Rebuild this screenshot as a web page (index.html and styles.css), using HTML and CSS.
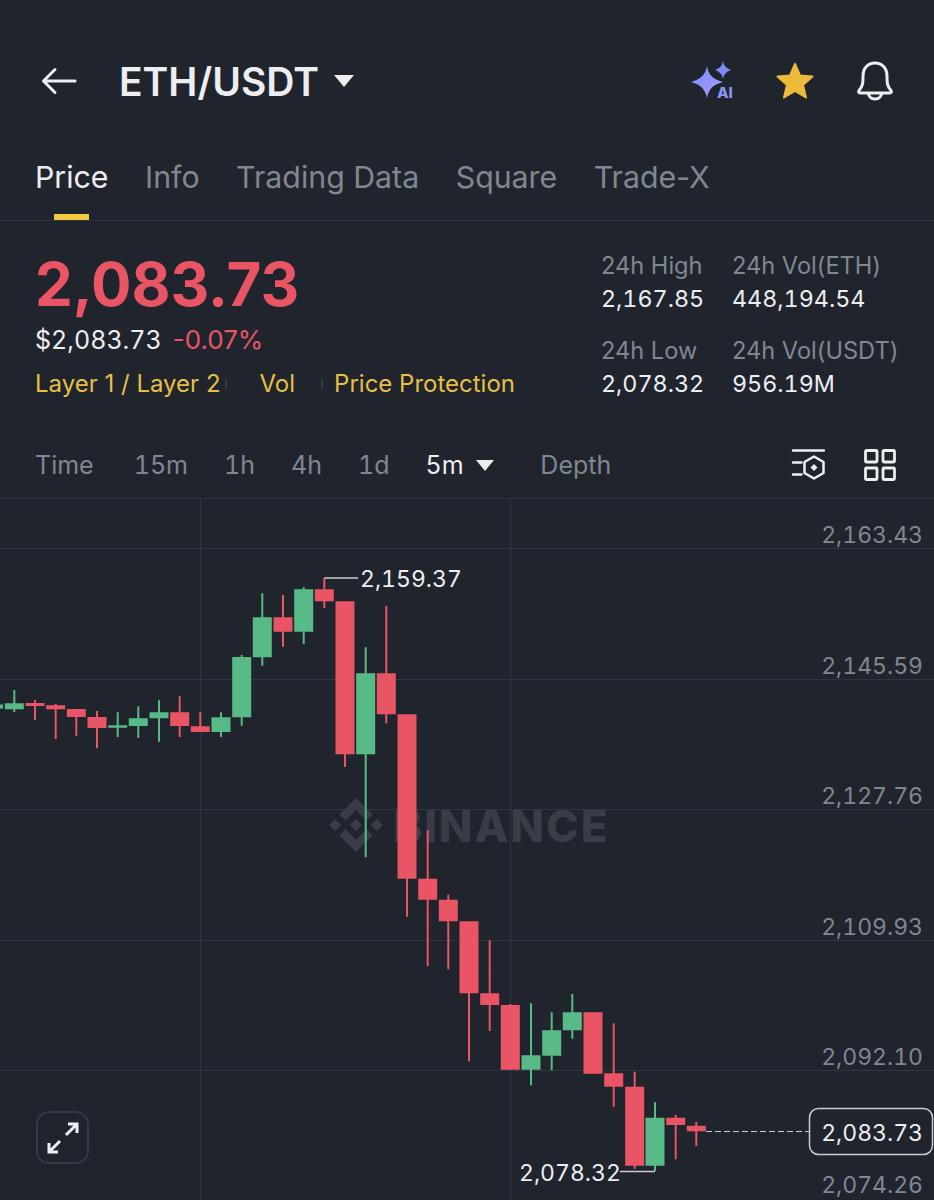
FILE: index.html
```html
<!DOCTYPE html>
<html lang="en">
<head>
  <meta charset="UTF-8">
  <meta name="viewport" content="width=device-width, initial-scale=1">
  <title>ETH/USDT</title>
  <link rel="stylesheet" href="styles.css">
</head>
<body>
  <header class="topbar">
    <div class="pair">
      <svg class="back" viewBox="0 0 36 28"><path d="M34 14H3M14 2.500L2.500 14 14 25.500"/></svg>
      <h1>ETH/USDT</h1>
      <span class="caret caret-lg"></span>
    </div>
    <div class="actions">
      <svg class="icon-ai" viewBox="0 0 44 40">
        <defs>
          <linearGradient id="aiGrad" x1="0" y1="0" x2="1" y2="1">
            <stop offset="0" stop-color="#6f8bff"/>
            <stop offset="1" stop-color="#b49cf6"/>
          </linearGradient>
        </defs>
        <path fill="url(#aiGrad)" d="M16 5C18 14 21 18 32 21 21 24 18 28 16 37 14 28 10 24 0 21 10 18 14 14 16 5Z"/>
        <path fill="#7f8cf8" d="M32 0C33 5 35 7 40 9 35 11 33 13 32 18 31 13 29 11 24 9 29 7 31 5 32 0Z"/>
        <text class="ai-label" x="26" y="37">AI</text>
      </svg>
      <svg class="icon-star" viewBox="0 0 40 40"><path d="M20 3L25 14.500 37.500 15.500 28 24 31 36.500 20 30 9 36.500 12 24 2.500 15.500 15 14.500Z"/></svg>
      <svg class="icon-bell" viewBox="0 0 40 40"><path d="M4 29.500C8 25 8 22 8 15 8 7 13 2 20 2S32 7 32 15C32 22 32 25 36 29.500 37 31 36 32 35 32H5C4 32 3 31 4 29.500ZM13 32C14 36 17 38 20 38S26 36 27 32"/></svg>
    </div>
  </header>

  <nav class="tabs">
    <a class="tab active">Price</a>
    <a class="tab">Info</a>
    <a class="tab">Trading Data</a>
    <a class="tab">Square</a>
    <a class="tab">Trade-X</a>
  </nav>

  <section class="summary">
    <div class="quote">
      <div class="last-price">2,083.73</div>
      <div class="fiat"><span class="usd">$2,083.73</span><span class="change">-0.07%</span></div>
      <div class="tags">
        <span>Layer 1 / Layer 2</span><i class="sep"></i>
        <span>Vol</span><i class="sep"></i>
        <span>Price Protection</span>
      </div>
    </div>
    <dl class="stats">
      <div><dt>24h High</dt><dd>2,167.85</dd></div>
      <div><dt>24h Vol(ETH)</dt><dd>448,194.54</dd></div>
      <div><dt>24h Low</dt><dd>2,078.32</dd></div>
      <div><dt>24h Vol(USDT)</dt><dd>956.19M</dd></div>
    </dl>
  </section>

  <div class="intervals">
    <span class="iv iv-time">Time</span>
    <span class="iv">15m</span>
    <span class="iv">1h</span>
    <span class="iv">4h</span>
    <span class="iv">1d</span>
    <span class="iv current">5m <span class="caret"></span></span>
    <span class="iv">Depth</span>
    <svg class="icon-indicators" viewBox="0 0 34 32">
      <path d="M2 1.500H33M2 13.500H10.500M2 25.500H10.500M23 7.500L32.500 13V24L23 29.500 13.500 24V13Z"/>
      <path class="dot" d="M23 15L26.500 18.500 23 22 19.500 18.500Z"/>
    </svg>
    <svg class="icon-grid" viewBox="0 0 32 32">
      <rect x="1.500" y="1.500" width="11.500" height="11.500" rx="1"/>
      <rect x="19" y="1.500" width="11.500" height="11.500" rx="1"/>
      <rect x="1.500" y="19" width="11.500" height="11.500" rx="1"/>
      <rect x="19" y="19" width="11.500" height="11.500" rx="1"/>
    </svg>
  </div>

  <div class="chart">
    <svg class="plot" viewBox="0 499 934 701">
      <!-- watermark -->
      <g class="mark" transform="translate(329 798) scale(.4265)">
        <path d="M38.730 53.200L63.320 28.620 87.920 53.220 102.220 38.910 63.320 0 24.420 38.900Z"/>
        <path d="M0 63.310L14.300 49 28.610 63.310 14.300 77.610Z"/>
        <path d="M38.730 73.410L63.320 98 87.920 73.400 102.230 87.690 63.320 126.600 24.410 87.720Z"/>
        <path d="M98 63.310L112.300 49 126.610 63.310 112.300 77.610Z"/>
        <path d="M77.830 63.300L63.320 48.780 48.810 63.280 63.320 77.780Z"/>
      </g>
      <text class="mark-text" x="393" y="842">BINANCE</text>

      <!-- grid -->
      <path class="grid" d="M0 548.500H934M0 679.500H934M0 809.500H934M0 940.500H934M0 1070.500H934M200.500 498V1200M510.500 498V1200"/>

      <!-- falling candles: wick + body -->
      <path class="down" d="
        M25.500 703h19v3h-19zM34 700h2v20h-2z
        M46.200 705.300h19v4h-19zM54.700 704h2v35h-2z
        M66.800 709h19v8h-19zM75.300 709h2v26.700h-2z
        M87.500 717h19v11h-19zM96 711h2v37.300h-2z
        M170.200 712.300h19v13.700h-19zM178.700 696.300h2v40.700h-2z
        M190.800 726.300h19v5.700h-19zM199.300 712.300h2v19.700h-2z
        M273.500 617.300h19v14.400h-19zM282 595h2v51.700h-2z
        M314.800 589.300h19v12h-19zM323.300 577.700h2v30.300h-2z
        M335.500 601.300h19v153h-19zM344 601.300h2v165.700h-2z
        M376.800 673.300h19v41h-19zM385.300 606h2v117.300h-2z
        M397.500 714.300h19v164.400h-19zM406 714.300h2v202.400h-2z
        M418.200 878.700h19v21h-19zM426.700 830h2v136h-2z
        M438.800 899.700h19v21.600h-19zM447.300 894.700h2v74.600h-2z
        M459.500 921.300h19v72h-19zM468 921.300h2v140h-2z
        M480.200 993.300h19v11.700h-19zM488.700 940.300h2v90.700h-2z
        M500.800 1005h19v64.700h-19zM509.300 1004h2v66h-2z
        M583.500 1012.300h19v61.400h-19z
        M604.200 1073.300h19v13.400h-19zM612.700 1023.300h2v83.400h-2z
        M625.200 1086.700h19v79h-19zM633.700 1071.700h2v97.300h-2z
        M666.200 1117.700h19v7.300h-19zM674.700 1115h2v44.300h-2z
        M686.800 1125.700h19v5.600h-19zM695.300 1121.700h2v24.300h-2z"/>

      <!-- rising candles -->
      <path class="up" d="
        M-16 704.500h19v4h-19z
        M4.800 703.300h19v6h-19zM13.300 690h2v22h-2z
        M108.200 725.300h19v2.400h-19zM116.700 712.300h2v24.700h-2z
        M128.800 718.300h19v7.700h-19zM137.300 706.300h2v31.700h-2z
        M149.500 712.300h19v6h-19zM158 700.300h2v41.400h-2z
        M211.500 717.300h19v14.700h-19zM220 712.300h2v24.700h-2z
        M232.200 657h19v60.300h-19zM240.700 655h2v70.700h-2z
        M252.800 617.300h19v40h-19zM261.300 593.300h2v72.400h-2z
        M294.200 589.300h19v42.400h-19zM302.700 587.300h2v56.700h-2z
        M356.200 673.300h19v81h-19zM364.700 647.300h2v210h-2z
        M521.500 1055.300h19v14.400h-19zM530 1003.300h2v82h-2z
        M542.200 1030.300h19v25.400h-19zM550.700 1012.300h2v58h-2z
        M562.800 1012.300h19v18h-19zM571.300 994h2v44.700h-2z
        M645.500 1117.700h19v48h-19zM654 1102.300h2v68.700h-2z"/>

      <!-- high / low markers -->
      <path class="marker" d="M324.500 578H358M620 1171.500H655"/>
      <text class="extreme" x="360" y="587">2,159.37</text>
      <text class="extreme" x="519" y="1181">2,078.32</text>

      <!-- last price -->
      <path class="last-line" d="M706 1131.500H809"/>
      <rect class="last-box" x="809.500" y="1108.500" width="123" height="46" rx="9"/>
      <text class="axis now" x="923" y="1141">2,083.73</text>

      <!-- price axis -->
      <text class="axis" x="923" y="543">2,163.43</text>
      <text class="axis" x="923" y="674">2,145.59</text>
      <text class="axis" x="923" y="804">2,127.76</text>
      <text class="axis" x="923" y="935">2,109.93</text>
      <text class="axis" x="923" y="1065">2,092.10</text>
      <text class="axis" x="923" y="1193">2,074.26</text>
    </svg>

    <button class="expand" aria-label="Fullscreen">
      <svg viewBox="0 0 32 32"><path d="M30 2L19 13M2 30L13 19M21 2H30V11M11 30H2V21"/></svg>
    </button>
  </div>
</body>
</html>
```

FILE: styles.css
```css
* { margin: 0; padding: 0; box-sizing: border-box; }
body {
  font-family: 'Inter', 'Lato', sans-serif;
  background: #20242d;
  color: #eceef2;
  width: 934px;
  height: 1200px;
  overflow: hidden;
}

.topbar {
  height: 140px;
  padding: 22px 39px 0 41px;
  display: flex;
  align-items: center;
  justify-content: space-between;
}
.pair { display: flex; align-items: center; }
.back {
  width: 36px;
  height: 28px;
  fill: none;
  stroke: #eceef2;
  stroke-width: 3;
  stroke-linecap: round;
  stroke-linejoin: round;
  margin-right: 42px;
}
.pair h1 { font-size: 39px; font-weight: 600; }
.caret {
  display: inline-block;
  width: 0;
  height: 0;
  border-left: 9px solid transparent;
  border-right: 9px solid transparent;
  border-top: 11px solid #eceef2;
}
.caret-lg { margin-left: 15px; border-left-width: 10px; border-right-width: 10px; border-top-width: 12px; }

.actions { display: flex; align-items: center; gap: 40px; }
.icon-ai { width: 44px; height: 40px; }
.ai-label { font-size: 15px; font-weight: 800; fill: #8b93f5; }
.icon-star { width: 40px; height: 40px; fill: #edbb3b; stroke: #edbb3b; stroke-width: 2; stroke-linejoin: round; }
.icon-bell { width: 40px; height: 40px; fill: none; stroke: #eceef2; stroke-width: 3; stroke-linejoin: round; stroke-linecap: round; }

.tabs {
  height: 81px;
  padding: 0 35px;
  display: flex;
  gap: 36.500px;
  border-bottom: 1px solid #2f343e;
}
.tab {
  position: relative;
  font-size: 30.300px;
  line-height: 74px;
  color: #808791;
}
.tab.active { color: #eceef2; }
.tab.active::after {
  content: '';
  position: absolute;
  left: 19px;
  bottom: 0;
  width: 35px;
  height: 6px;
  background: #f0c93f;
}

.summary {
  height: 205px;
  padding: 0 37px 0 35px;
  display: flex;
  justify-content: space-between;
}
.last-price {
  font-size: 60px;
  font-weight: 700;
  line-height: 62px;
  margin-top: 32px;
  color: #e95564;
}
.fiat {
  display: flex;
  gap: 11px;
  font-size: 26px;
  line-height: 34px;
  margin-top: 8px;
}
.usd { font-size: 25px; font-variant-numeric: tabular-nums; }
.change { color: #e95564; }
.tags {
  display: flex;
  align-items: center;
  font-size: 24px;
  line-height: 32px;
  margin-top: 11px;
  color: #e8bf45;
}
.sep {
  width: 2px;
  height: 10px;
  background: #363b45;
  margin: 0 33px 0 4px;
}
.sep + span + .sep { margin: 0 11px 0 26px; }

.stats {
  display: grid;
  grid-template-columns: 131px 165px;
  row-gap: 19px;
  margin-top: 28px;
  align-self: flex-start;
  font-size: 23.600px;
  line-height: 33px;
  white-space: nowrap;
}
.stats dt { color: #808791; }
.stats dd { color: #eceef2; font-size: 23.300px; font-variant-numeric: tabular-nums; }

.intervals {
  height: 73px;
  padding: 6px 38px 0 35px;
  display: flex;
  align-items: center;
  font-size: 25px;
  font-variant-numeric: tabular-nums;
  color: #808791;
  border-bottom: 1px solid #2f343e;
}
.iv { margin-right: 36px; white-space: nowrap; }
.iv-time { margin-right: 40px; }
.iv.current { color: #eceef2; margin-right: 46px; }
.iv.current .caret { margin-left: 6px; vertical-align: 3px; }
.icon-indicators {
  width: 34px;
  height: 32px;
  margin-left: auto;
  fill: none;
  stroke: #eceef2;
  stroke-width: 2.500;
  stroke-linecap: round;
  stroke-linejoin: round;
}
.icon-indicators .dot { fill: #eceef2; stroke: none; }
.icon-grid {
  width: 32px;
  height: 32px;
  margin-left: 39px;
  fill: none;
  stroke: #eceef2;
  stroke-width: 2.800;
}

.chart { position: relative; height: 701px; }
.plot { display: block; width: 934px; height: 701px; }
.grid { fill: none; stroke: #30353f; stroke-width: 1; }
.mark { fill: #383d48; }
.mark-text { font-size: 44px; font-weight: 800; fill: #383d48; letter-spacing: 2px; }
.down { fill: #e95564; }
.up { fill: #58ba87; }
.marker { fill: none; stroke: #c9ccd2; stroke-width: 1.500; }
.extreme { font-size: 23px; fill: #eceef2; font-variant-numeric: tabular-nums; }
.axis { font-size: 23px; fill: #808791; text-anchor: end; font-variant-numeric: tabular-nums; }
.axis.now { fill: #eceef2; }
.last-line { fill: none; stroke: #c9ccd2; stroke-width: 1; stroke-dasharray: 6 3; }
.last-box { fill: #20242d; stroke: #c9ccd2; stroke-width: 1.500; }

.expand {
  position: absolute;
  left: 36px;
  top: 612px;
  width: 53px;
  height: 53px;
  background: #20242d;
  border: 2px solid #343944;
  border-radius: 13px;
  display: flex;
  align-items: center;
  justify-content: center;
}
.expand svg {
  width: 32px;
  height: 32px;
  fill: none;
  stroke: #eceef2;
  stroke-width: 3;
}
```
